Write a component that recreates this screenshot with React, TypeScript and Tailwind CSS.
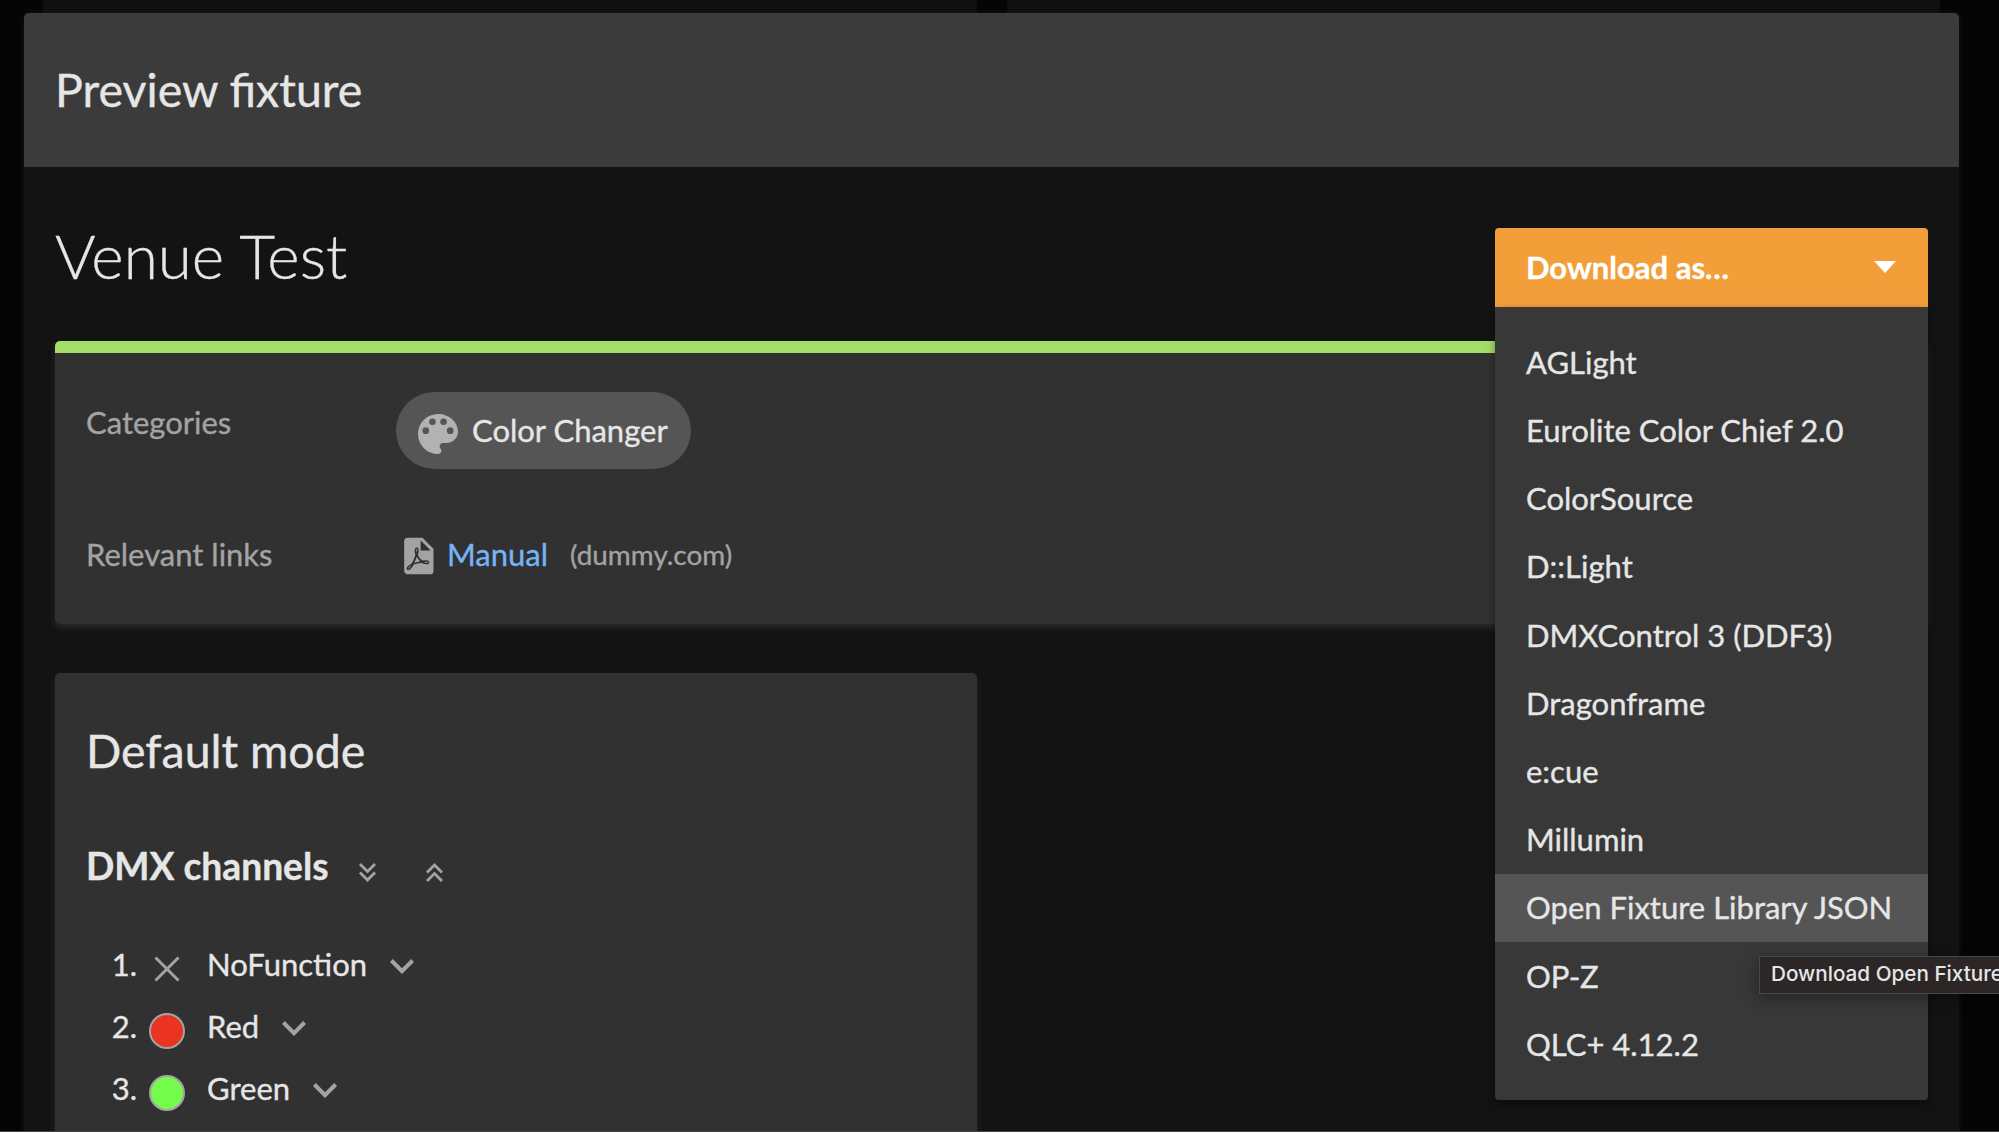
import type { ReactNode } from "react";

const formats = [
  "AGLight",
  "Eurolite Color Chief 2.0",
  "ColorSource",
  "D::Light",
  "DMXControl 3 (DDF3)",
  "Dragonframe",
  "e:cue",
  "Millumin",
  "Open Fixture Library JSON",
  "OP-Z",
  "QLC+ 4.12.2",
];

function PaletteIcon() {
  return (
    <svg viewBox="3 3 18 18" className="h-10 w-10 fill-[#b2b2b2]">
      <path d="M17.5 12a1.5 1.5 0 1 1 0-3 1.5 1.5 0 0 1 0 3zm-3-4a1.5 1.5 0 1 1 0-3 1.5 1.5 0 0 1 0 3zm-5 0a1.5 1.5 0 1 1 0-3 1.5 1.5 0 0 1 0 3zm-3 4a1.5 1.5 0 1 1 0-3 1.5 1.5 0 0 1 0 3zM12 3a9 9 0 0 0 0 18c.83 0 1.5-.67 1.5-1.5 0-.39-.15-.74-.39-1.01-.23-.26-.38-.61-.38-.99 0-.83.67-1.5 1.5-1.5H16c2.76 0 5-2.24 5-5 0-4.42-4.03-8-9-8z" fillRule="evenodd" />
    </svg>
  );
}

function PdfIcon() {
  return (
    <svg viewBox="0 0 24 24" className="-ml-px mt-[4px] h-11 w-11 fill-[#a3a3a3]">
      <path d="M14,9H19.5L14,3.5V9M7,2H15L21,8V20A2,2 0 0,1 19,22H7C5.89,22 5,21.1 5,20V4A2,2 0 0,1 7,2M11.93,12.44C12.34,13.34 12.86,14.08 13.46,14.59L13.87,14.91C13,15.07 11.8,15.35 10.53,15.84V15.84L10.42,15.88L10.92,14.84C11.37,13.97 11.7,13.18 11.93,12.44M18.41,16.25C18.59,16.07 18.68,15.84 18.69,15.59C18.72,15.39 18.67,15.2 18.57,15.04C18.28,14.57 17.53,14.35 16.29,14.35L15,14.42L14.13,13.84C13.5,13.32 12.93,12.41 12.53,11.28L12.57,11.14C12.9,9.81 13.21,8.2 12.55,7.54C12.39,7.38 12.17,7.3 11.94,7.3H11.7C11.33,7.3 11,7.69 10.91,8.07C10.54,9.4 10.76,10.13 11.13,11.34V11.35C10.88,12.23 10.56,13.25 10.05,14.28L9.09,16.08L8.2,16.57C7,17.32 6.43,18.16 6.32,18.69C6.28,18.88 6.3,19.05 6.37,19.23L6.4,19.28L6.88,19.59L7.32,19.7C8.13,19.7 9.05,18.75 10.29,16.63L10.47,16.56C11.5,16.23 12.78,16 14.5,15.81C15.53,16.32 16.74,16.55 17.5,16.55C17.94,16.55 18.24,16.44 18.41,16.25M18,15.54L18.09,15.65C18.08,15.75 18.05,15.76 18,15.78H17.96L17.77,15.8C17.31,15.8 16.6,15.61 15.87,15.29C15.96,15.19 16,15.19 16.1,15.19C17.5,15.19 17.9,15.44 18,15.54M8.83,17C8.18,18.19 7.59,18.85 7.14,19C7.19,18.62 7.64,17.96 8.35,17.31L8.83,17M11.85,10.09C11.62,9.19 11.61,8.46 11.78,8.04L11.85,7.92L12,7.97C12.17,8.21 12.19,8.53 12.09,9.07L12.06,9.23L11.9,10.05L11.85,10.09Z" />
    </svg>
  );
}

function DoubleChevron({ up = false }: { up?: boolean }) {
  return (
    <svg viewBox="6 5.59 12 13.41" className={up ? "h-[19px] w-[17px] rotate-180 fill-[#a3a3a3]" : "h-[19px] w-[17px] fill-[#a3a3a3]"}>
      <path d="M16.59,5.59L18,7L12,13L6,7L7.41,5.59L12,10.17L16.59,5.59M16.59,11.59L18,13L12,19L6,13L7.41,11.59L12,16.17L16.59,11.59Z" />
    </svg>
  );
}

function ChevronDown() {
  return (
    <svg viewBox="6 8.58 12 7.42" className="mt-1 h-[15px] w-6 fill-[#a3a3a3]">
      <path d="M7.41,8.58L12,13.17L16.59,8.58L18,10L12,16L6,10L7.41,8.58Z" />
    </svg>
  );
}

function NoFunctionIcon() {
  return (
    <svg viewBox="0 0 36 36" className="h-9 w-9 fill-none stroke-[#a3a3a3]">
      <path d="M6.5 6.5L29.5 29.5M29.5 6.5L6.5 29.5" strokeWidth="3" />
    </svg>
  );
}

function Channel({ index, name, icon }: { index: number; name: string; icon: ReactNode }) {
  return (
    <li className="flex h-[62px] items-center">
      <span className="w-[51px] text-right">{index}.</span>
      <span className="ml-[12px] mt-[9px]">{icon}</span>
      <span className="ml-[22px] mr-[23px]">{name}</span>
      <ChevronDown />
    </li>
  );
}

export default function App() {
  return (
    <div className="relative flex h-[1132px] w-[1999px] flex-col overflow-hidden border-b border-[#444444] bg-[#050505] font-['Lato',sans-serif] text-[31px] leading-[1.5] text-[#e6e6e6] [-webkit-text-stroke:0.35px_currentColor]">
      <div className="flex h-[13px] shrink-0 gap-[30px] pl-[43px] pr-[59px]">
        <div className="flex-1 bg-[#101010]" />
        <div className="flex-1 bg-[#101010]" />
      </div>

      <div className="ml-[24px] flex h-[1200px] w-[1935px] shrink-0 flex-col rounded-t-[5px] bg-[#131313] shadow-[0_0_6px_#131313]">
        <header className="flex h-[154px] shrink-0 items-center rounded-t-[5px] bg-[#3b3b3b] px-[31px]">
          <h2 className="-mt-px text-[46.5px] leading-none">Preview fixture</h2>
        </header>

        <main className="flex flex-col px-[31px] pt-[61px]">
          <div className="flex h-[113px] items-start justify-between">
            <h1 className="-mt-1 text-[62px] font-light leading-[62px]">Venue Test</h1>
            <div className="relative z-10 w-[433px]">
              <button className="flex h-[79px] w-full items-center justify-between rounded-t-[4px] bg-[#f29f39] pl-[31px] pr-[32px] font-bold text-white">
                <span>Download as…</span>
                <svg viewBox="0 0 22 12" className="-mt-0.5 h-3 w-[22px] fill-white">
                  <path d="M0 0H22L11 12Z" />
                </svg>
              </button>
              <ul className="absolute left-0 top-[79px] h-[793px] w-full rounded-b-[4px] bg-[#383838] pt-[21px] shadow-[0_4px_8px_rgba(0,0,0,0.4)]">
                {formats.map((format) => (
                  <li
                    key={format}
                    className={
                      format === "Open Fixture Library JSON"
                        ? "flex h-[68.2px] items-center whitespace-nowrap bg-[#555555] px-[31px]"
                        : "flex h-[68.2px] items-center whitespace-nowrap px-[31px]"
                    }
                  >
                    {format}
                  </li>
                ))}
              </ul>
            </div>
          </div>

          <section className="flex h-[283px] flex-col rounded-[5px] border-t-[12px] border-[#a4dd69] bg-[#313131] px-[31px] shadow-[0_4px_6px_#2a2a2a]">
            <div className="mt-[39px] flex h-[78px] items-start">
              <span className="mt-[7px] w-[310px] text-[#a3a3a3]">Categories</span>
              <span className="flex h-[77px] w-[295px] items-center rounded-full bg-[#555555] pl-[22px]">
                <span className="mt-1.5"><PaletteIcon /></span>
                <span className="ml-[14px]">Color Changer</span>
              </span>
            </div>
            <div className="mt-[61px] flex h-[46px] items-center">
              <span className="w-[310px] text-[#a3a3a3]">Relevant links</span>
              <PdfIcon />
              <span className="ml-[8px] text-[#76b4f5]">Manual</span>
              <span className="ml-[22px] mt-0.5 text-[27.9px] text-[#a3a3a3]">(dummy.com)</span>
            </div>
          </section>

          <section className="mt-[49px] h-[500px] w-[922px] rounded-[5px] bg-[#313131] px-[31px] shadow-[0_4px_6px_#2a2a2a]">
            <h3 className="mt-[54px] text-[46.5px] leading-[46px]">Default mode</h3>
            <div className="mt-[67px] flex h-[52px] items-center">
              <h4 className="text-[37.2px] font-bold">DMX channels</h4>
              <div className="ml-[30px] mt-3 flex gap-[50px]">
                <DoubleChevron />
                <DoubleChevron up />
              </div>
            </div>
            <ol className="mt-[41px]">
              <Channel index={1} name="NoFunction" icon={<NoFunctionIcon />} />
              <Channel index={2} name="Red" icon={<span className="block h-9 w-9 rounded-full border-2 border-[#a3a3a3] bg-[#ea3323]" />} />
              <Channel index={3} name="Green" icon={<span className="block h-9 w-9 rounded-full border-2 border-[#a3a3a3] bg-[#75fb4c]" />} />
            </ol>
          </section>
        </main>
      </div>

      <div className="absolute left-[1759px] top-[956px] z-20 flex h-[38px] w-[260px] items-center whitespace-nowrap border border-[#4b4747] bg-[#2c2626] pb-0.5 pl-[11px] font-['Inter',sans-serif] text-[20.7px] font-medium leading-none text-[#e6e6e6] shadow-[0_4px_16px_rgba(0,0,0,0.4)] [-webkit-text-stroke:0px]">
        Download Open Fixture
      </div>
    </div>
  );
}
